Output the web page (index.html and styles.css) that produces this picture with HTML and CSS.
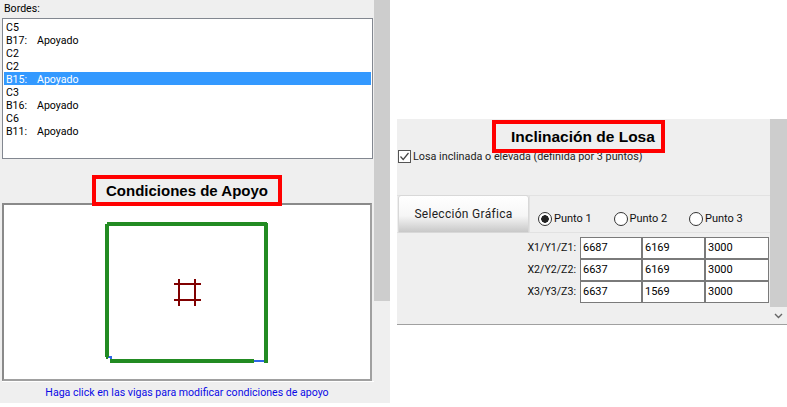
FILE: index.html
```html
<!DOCTYPE html>
<html lang="es">
<head>
<meta charset="utf-8">
<title>Condiciones de Apoyo</title>
<link rel="stylesheet" href="styles.css">
</head>
<body>
<div class="page">
  <section class="left">
    <div class="left-main">
      <div class="label">Bordes:</div>
      <ul class="list">
        <li><span class="k">C5</span></li>
        <li><span class="k">B17:</span>Apoyado</li>
        <li><span class="k">C2</span></li>
        <li><span class="k">C2</span></li>
        <li class="sel"><span class="k">B15:</span>Apoyado</li>
        <li><span class="k">C3</span></li>
        <li><span class="k">B16:</span>Apoyado</li>
        <li><span class="k">C6</span></li>
        <li><span class="k">B11:</span>Apoyado</li>
      </ul>
      <div class="title-row"><h2 class="title title-a">Condiciones de Apoyo</h2></div>
      <div class="canvas">
        <svg class="diagram" width="366" height="174" viewBox="0 0 366 174">
          <g fill="#2f66e8">
            <rect x="249" y="155" width="11" height="2"/>
            <rect x="104" y="151" width="4" height="2"/>
            <rect x="106" y="151" width="2" height="4"/>
          </g>
          <g fill="#228b22">
            <rect x="103" y="17" width="160" height="4"/>
            <rect x="101" y="19" width="4" height="133"/>
            <rect x="102" y="152" width="2" height="2"/>
            <rect x="260" y="18" width="4" height="140"/>
            <rect x="106" y="154" width="144" height="4"/>
          </g>
          <g fill="#800000">
            <rect x="170" y="78" width="27" height="2"/>
            <rect x="170" y="94" width="27" height="2"/>
            <rect x="174" y="74" width="2" height="27"/>
            <rect x="190" y="74" width="2" height="27"/>
          </g>
        </svg>
      </div>
      <div class="hint">Haga click en las vigas para modificar condiciones de apoyo</div>
    </div>
    <div class="scroll"><div class="thumb"></div></div>
  </section>
  <section class="right">
    <div class="right-main">
      <div class="title-row2"><h2 class="title title-b">Inclinación de Losa</h2></div>
      <label class="check">
        <svg class="checkbox" width="13" height="13" viewBox="0 0 13 13"><rect x=".5" y=".5" width="12" height="12" fill="#fff" stroke="#555"/><path d="M2.5 6.5 5.2 9.5 10.5 3" fill="none" stroke="#444" stroke-width="1.2"/></svg>
        <span>Losa inclinada o elevada (definida por 3 puntos)</span>
      </label>
      <div class="controls">
        <button class="btn">Selección Gráfica</button>
        <div class="radios">
          <span class="radio on"><i class="dot"></i>Punto 1</span>
          <span class="radio"><i class="dot"></i>Punto 2</span>
          <span class="radio"><i class="dot"></i>Punto 3</span>
        </div>
      </div>
      <div class="coords">
        <span class="c-label">X1/Y1/Z1:</span><span class="cell">6687</span><span class="cell">6169</span><span class="cell">3000</span>
        <span class="c-label">X2/Y2/Z2:</span><span class="cell">6637</span><span class="cell">6169</span><span class="cell">3000</span>
        <span class="c-label">X3/Y3/Z3:</span><span class="cell">6637</span><span class="cell">1569</span><span class="cell">3000</span>
      </div>
    </div>
    <div class="scroll2">
      <div class="thumb2"></div>
      <svg class="arrow" width="9" height="6" viewBox="0 0 9 6"><path d="M1 1 4.5 4.5 8 1" fill="none" stroke="#666" stroke-width="1.4"/></svg>
    </div>
  </section>
</div>
</body>
</html>
```
FILE: styles.css
```css
* { box-sizing: border-box; }
html, body { margin: 0; padding: 0; background: #fff; }
body { font-family: Roboto, "Noto Sans", sans-serif; font-size: 10.6px; color: #000; overflow: hidden; }
.page { display: flex; width: 787px; height: 407px; align-items: flex-start; }

.left { display: flex; width: 390px; height: 403px; background: #efefef; flex: none; }
.left-main { width: 374px; padding-left: 2px; flex: none; position: relative; }
.label { height: 18px; line-height: 18px; padding-left: 2px; }
.list { list-style: none; margin: 0; padding: 1px; width: 371px; height: 141px; background: #fff; border: 1px solid #828790; }
.list li { height: 13px; line-height: 15px; padding-left: 2px; white-space: nowrap; }
.list li.sel { background: #3399ff; color: #fff; }
.k { display: inline-block; width: 31px; }

.title-row { height: 43px; display: flex; justify-content: center; padding-right: 2px; }
.title { margin: 0; font-family: "Liberation Sans", Arial, sans-serif; font-weight: 700; font-size: 15px; border: 4px solid #f00; position: relative; z-index: 1; white-space: nowrap; }
.title-a { width: 190px; height: 31px; margin-top: 16px; text-align: center; line-height: 24px; }

.canvas { width: 370px; height: 178px; margin-top: 1px; background: #fff; border: 2px solid #a0a0a0; border-top-color: #8a8a8a; border-left-color: #8a8a8a; }
.diagram { display: block; }
.hint { height: 22px; line-height: 21px; text-align: center; color: #0a0ae6; padding-right: 2px; border-top: 1px solid #fff; }

.scroll { width: 16px; height: 403px; background: #efefef; flex: none; }
.thumb { height: 301px; background: #cdcdcd; }

.right { display: flex; width: 390px; height: 206px; margin: 119px 0 0 7px; background: #efefef; border-bottom: 1px solid #a0a0a0; flex: none; }
.right-main { width: 373px; flex: none; }
.title-row2 { height: 27px; padding-left: 95px; }
.title-b { width: 173px; height: 33px; margin-top: 1px; padding-left: 15px; font-size: 15.5px; line-height: 26px; }
.check { display: flex; align-items: center; gap: 2px; height: 16px; margin-top: 1px; padding-left: 1px; position: relative; font-size: 10.8px; }
.check span { color: #222; }
.controls { display: flex; height: 38px; margin-top: 31px; border-top: 1px solid #e2e2e2; border-bottom: 1px solid #e2e2e2; }
.btn { width: 131px; height: 38px; margin: -1px 0 0 1px; font: 12px Roboto, sans-serif; color: #222; letter-spacing: .3px; border: 1px solid #d8d8d8; border-radius: 3px 3px 0 0; background: linear-gradient(#fff 0, #f6f6f6 55%, #c8c8c8 100%); padding: 0; }
.radios { display: flex; align-items: center; padding: 9px 0 0 8px; height: 36px; border-left: 1px solid #e2e2e2; }
.radio { display: flex; align-items: center; gap: 2px; width: 75.5px; font-size: 11px; color: #111; }
.dot { width: 14px; height: 14px; border: 1px solid #333; border-radius: 50%; background: #fff; flex: none; }
.radio.on .dot { background: radial-gradient(circle, #222 0, #222 3.5px, #fff 4px); }

.coords { display: grid; grid-template-columns: 183px 62px 63px 64px; grid-auto-rows: 22px; margin-top: 4px; }
.c-label { text-align: right; padding-right: 4px; line-height: 21px; color: #111; }
.cell { background: #fff; border: 1px solid #7a7a7a; padding-left: 2px; line-height: 19px; font-size: 11px; }

.scroll2 { width: 17px; flex: none; background: #efefef; }
.thumb2 { height: 188px; background: #cdcdcd; }
.arrow { display: block; margin: 6px auto 0; }
```
